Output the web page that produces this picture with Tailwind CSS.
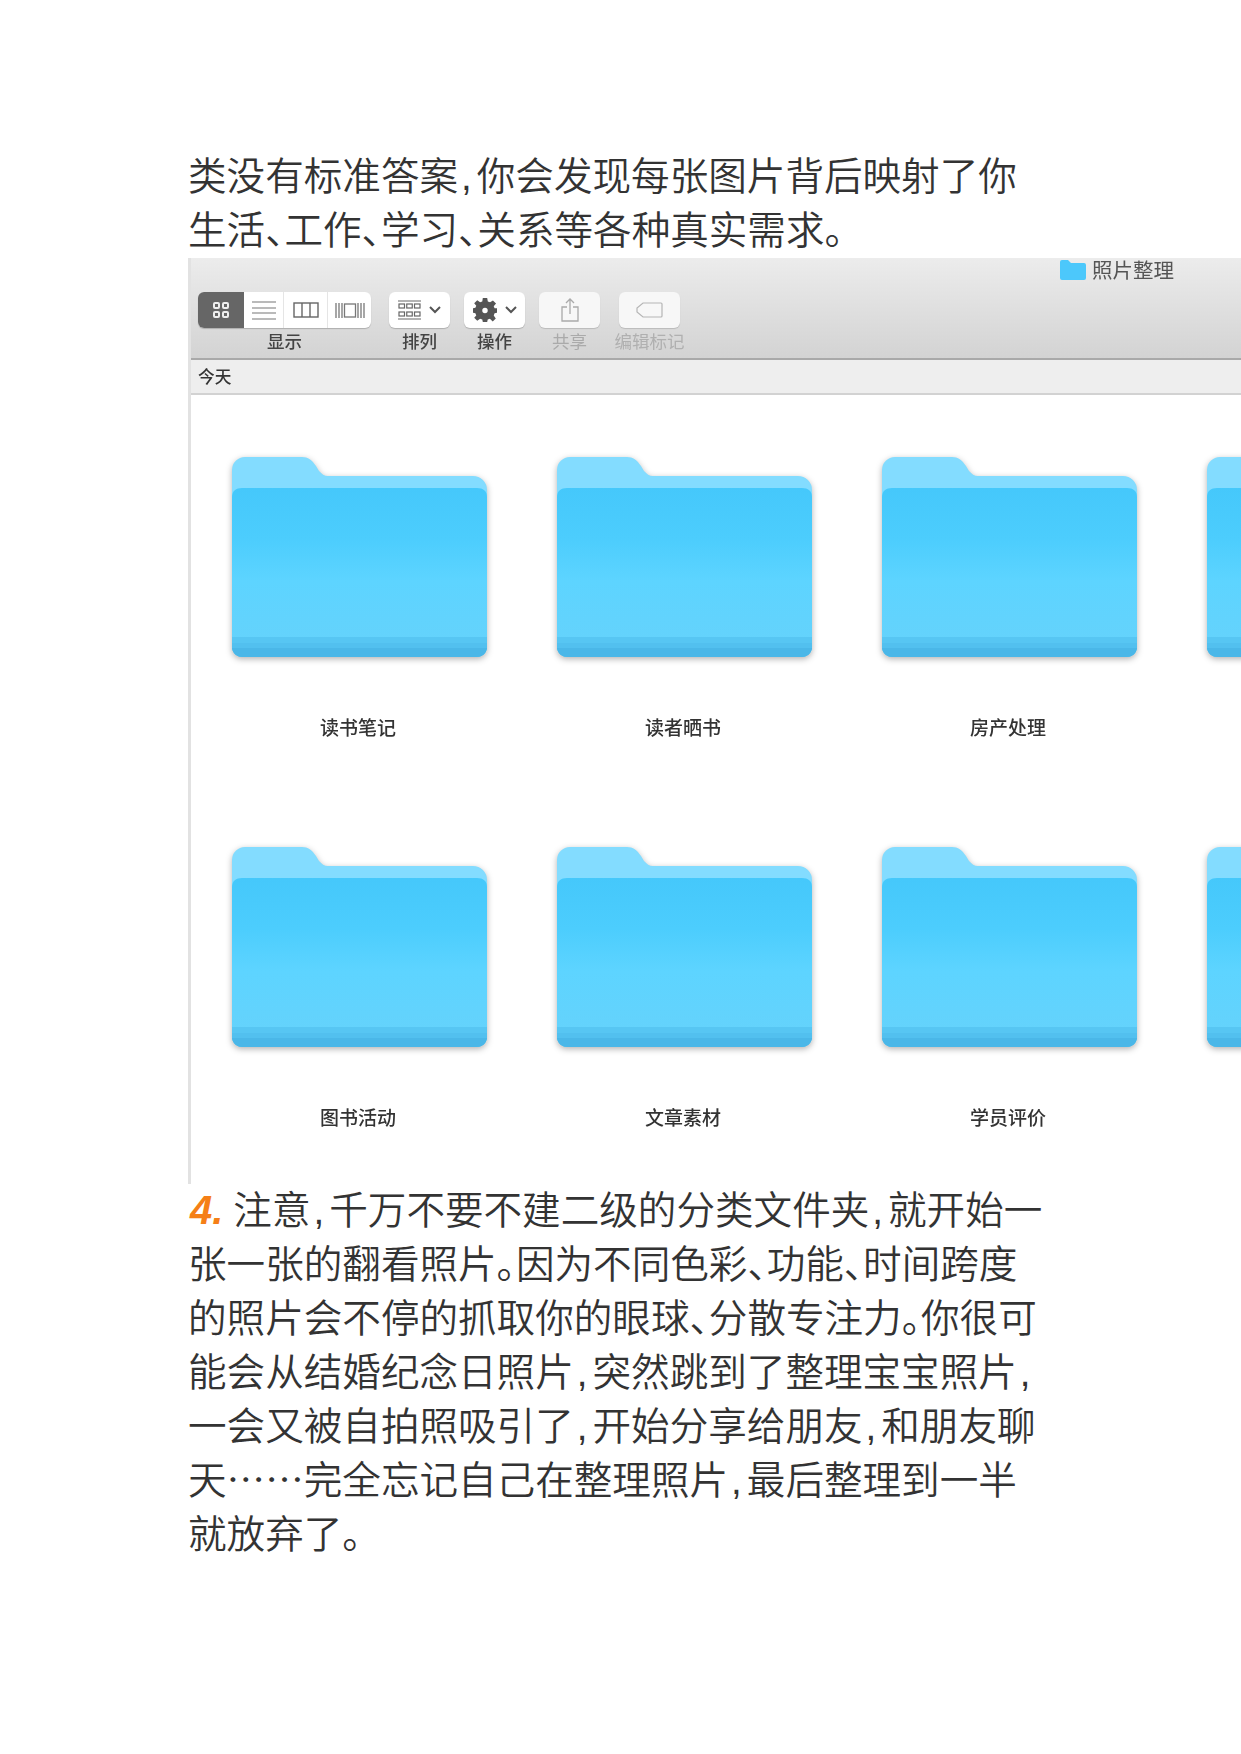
<!DOCTYPE html>
<html lang="zh-CN">
<head>
  <meta charset="UTF-8">
  <title>照片整理</title>
  <script src="https://cdn.jsdelivr.net/npm/@tailwindcss/browser@4"></script>
</head>
<body class="bg-white">
  <!-- shared folder artwork -->
  <svg width="0" height="0" class="absolute">
    <defs>
      <linearGradient id="front" x1="0" y1="0" x2="0" y2="1">
        <stop offset="0" stop-color="#45c8fb"/>
        <stop offset="0.3" stop-color="#4ccdfd"/>
        <stop offset="0.55" stop-color="#5dd4ff"/>
        <stop offset="1" stop-color="#66d2fb"/>
      </linearGradient>
      <symbol id="folder" viewBox="0 0 255 201">
        <path d="M0 14a13 13 0 0 1 13-13h57c6 0 10 3 14 9l3 5c3 3 5 5 9 5h145a14 14 0 0 1 14 14v30H0z" fill="#83dcff"/>
        <path d="M0 41c0-6 4-9 10-9h235c6 0 10 3 10 9v149c0 7-5 11-11 11H11c-6 0-11-4-11-11z" fill="url(#front)"/>
        <path d="M0 181h255v9c0 7-5 11-11 11H11c-6 0-11-4-11-11z" fill="#57c6f3"/>
        <path d="M0 187h255v3c0 7-5 11-11 11H11c-6 0-11-4-11-11z" fill="#52c0ef"/>
        <path d="M0 192h255c-1 6-5 9-11 9H11c-6 0-10-3-11-9z" fill="#4ab7e8"/>
      </symbol>
    </defs>
  </svg>

  <div class="w-[1241px] h-[1754px] overflow-hidden pt-[146px] font-['Noto_Sans_CJK_SC',sans-serif] font-[350] text-[38.6px] leading-[54px] text-[#333] [font-feature-settings:'halt']">
    <div class="pl-[188px] whitespace-nowrap">
      <div>类没有标准答案<span class="font-['Liberation_Sans',sans-serif] leading-none ml-[3px] mr-[5px]">,</span>你会发现每张图片背后映射了你</div>
      <div>生活、工作、学习、关系等各种真实需求。</div>
    </div>

    <!-- finder window, the source is a soft upscaled screenshot -->
    <div class="ml-[188px] mt-[4px] h-[926px] border-l-[3px] border-[#e2e2e2] bg-white text-[17.5px] leading-none [font-feature-settings:normal] font-normal blur-[0.5px]">
      <div class="h-[102px] bg-gradient-to-b from-[#ececec] to-[#d3d3d3] border-b-2 border-[#a9a9a9]">
        <div class="h-[34px] pb-[11px] flex items-center pl-[869px] text-[20.5px] text-[#555]">
          <svg width="26" height="21" viewBox="0 0 26 21" class="mr-[6px]">
            <path d="M0 3a2 2 0 0 1 2-2h6l3 3h13a2 2 0 0 1 2 2v13a2 2 0 0 1-2 2H2a2 2 0 0 1-2-2z" fill="#4cc8fb"/>
          </svg>
          <span>照片整理</span>
        </div>
        <div class="flex pl-[7px] text-[#444] whitespace-nowrap">
          <div class="w-[173px] flex flex-col items-center">
            <div class="w-full h-[36px] flex rounded-[6px] bg-white shadow-[0_1px_1px_rgba(0,0,0,0.2)] overflow-hidden">
              <div class="w-[46px] bg-[#666] flex items-center justify-center">
                <svg width="18" height="18" viewBox="0 0 18 18" fill="none" stroke="#eee" stroke-width="2"><rect x="2" y="2" width="5" height="5" rx="1"/><rect x="11" y="2" width="5" height="5" rx="1"/><rect x="2" y="11" width="5" height="5" rx="1"/><rect x="11" y="11" width="5" height="5" rx="1"/></svg>
              </div>
              <div class="w-[40px] border-r border-[#e5e5e5] flex items-center justify-center">
                <svg width="24" height="19" viewBox="0 0 24 19" stroke="#777" stroke-width="1.2"><path d="M0 1h24M0 7h24M0 12h24M0 18h24"/></svg>
              </div>
              <div class="w-[44px] border-r border-[#e5e5e5] flex items-center justify-center">
                <svg width="26" height="16" viewBox="0 0 26 16" fill="none" stroke="#666" stroke-width="1.4"><rect x="1" y="1" width="24" height="14"/><path d="M9 1v14M17 1v14"/></svg>
              </div>
              <div class="flex-1 flex items-center justify-center">
                <svg width="30" height="17" viewBox="0 0 30 17" fill="none" stroke="#777" stroke-width="1.3"><rect x="9.500" y="2" width="11" height="13"/><path d="M1 1v15M4 1v15M7 1v15M23 1v15M26 1v15M29 1v15"/></svg>
              </div>
            </div>
            <span class="mt-[4px] font-medium">显示</span>
          </div>

          <div class="ml-[18px] w-[61px] flex flex-col items-center">
            <div class="w-full h-[36px] flex items-center justify-center gap-[8px] rounded-[6px] bg-white shadow-[0_1px_1px_rgba(0,0,0,0.2)]">
              <svg width="23" height="20" viewBox="0 0 23 20" fill="none" stroke="#666" stroke-width="1.2"><path d="M0 1h23M0 19h23"/><rect x="1" y="4" width="5.500" height="4"/><rect x="8.750" y="4" width="5.500" height="4"/><rect x="16.500" y="4" width="5.500" height="4"/><rect x="1" y="12" width="5.500" height="4"/><rect x="8.750" y="12" width="5.500" height="4"/><rect x="16.500" y="12" width="5.500" height="4"/></svg>
              <svg width="12" height="8" viewBox="0 0 12 8" fill="none" stroke="#555" stroke-width="2"><path d="M1 1l5 5 5-5"/></svg>
            </div>
            <span class="mt-[4px] font-medium">排列</span>
          </div>

          <div class="ml-[14px] w-[61px] flex flex-col items-center">
            <div class="w-full h-[36px] flex items-center justify-center gap-[8px] rounded-[6px] bg-white shadow-[0_1px_1px_rgba(0,0,0,0.2)]">
              <svg width="24" height="24" viewBox="0 0 22 22"><path fill="#555" fill-rule="evenodd" d="M9 0h4l.6 3.200 2 .8L18.300 2.200l2.800 2.800L19 7.500l.8 2L22 9.500v4l-2.200.5-.8 2 1.900 2.700-2.800 2.800L15.500 19l-2 .8L13 22H9l-.5-2.200-2-.8-2.600 1.900-2.800-2.800L3 16l-.8-2L0 13.500v-4l2.200-.5.800-2L1.100 4.900l2.800-2.800L6.500 4l2-.8zM11 9a2.500 2.500 0 1 0 0 5 2.500 2.500 0 0 0 0-5z"/></svg>
              <svg width="12" height="8" viewBox="0 0 12 8" fill="none" stroke="#555" stroke-width="2"><path d="M1 1l5 5 5-5"/></svg>
            </div>
            <span class="mt-[4px] font-medium">操作</span>
          </div>

          <div class="ml-[14px] w-[61px] flex flex-col items-center text-[#aaa]">
            <div class="w-full h-[36px] flex items-center justify-center rounded-[6px] bg-[#f7f7f7] shadow-[0_1px_1px_rgba(0,0,0,0.15)]">
              <svg width="18" height="24" viewBox="0 0 18 24" fill="none" stroke="#aaa" stroke-width="1.300"><path d="M6 9H1v14h16V9h-5M9 16V1M5 5l4-4 4 4"/></svg>
            </div>
            <span class="mt-[4px]">共享</span>
          </div>

          <div class="ml-[19px] w-[61px] flex flex-col items-center text-[#b0b0b0]">
            <div class="w-full h-[36px] flex items-center justify-center rounded-[6px] bg-[#f7f7f7] shadow-[0_1px_1px_rgba(0,0,0,0.15)]">
              <svg width="27" height="16" viewBox="0 0 27 16" fill="none" stroke="#b5b5b5" stroke-width="1.200"><path d="M7 1h18a1 1 0 0 1 1 1v12a1 1 0 0 1-1 1H7l-6-5V6z"/></svg>
            </div>
            <span class="mt-[4px]">编辑标记</span>
          </div>
        </div>
      </div>

      <div class="h-[35px] bg-[#eee] border-b-2 border-[#d2d2d2] flex items-center pl-[7px] text-[#333] text-[16.7px] font-medium">今天</div>

      <div class="pt-[61px] pl-[41px] grid grid-cols-[repeat(4,255px)] gap-x-[70px] gap-y-[106.5px] text-[19px] leading-[24px] text-[#333] text-center font-medium">
        <div><svg width="255" height="201" class="drop-shadow-[0_2px_3px_rgba(0,0,0,0.3)]"><use href="#folder"/></svg><div class="mt-[58px] pr-[3px]">读书笔记</div></div>
        <div><svg width="255" height="201" class="drop-shadow-[0_2px_3px_rgba(0,0,0,0.3)]"><use href="#folder"/></svg><div class="mt-[58px] pr-[3px]">读者晒书</div></div>
        <div><svg width="255" height="201" class="drop-shadow-[0_2px_3px_rgba(0,0,0,0.3)]"><use href="#folder"/></svg><div class="mt-[58px] pr-[3px]">房产处理</div></div>
        <div><svg width="255" height="201" class="drop-shadow-[0_2px_3px_rgba(0,0,0,0.3)]"><use href="#folder"/></svg></div>
        <div><svg width="255" height="201" class="drop-shadow-[0_2px_3px_rgba(0,0,0,0.3)]"><use href="#folder"/></svg><div class="mt-[58px] pr-[3px]">图书活动</div></div>
        <div><svg width="255" height="201" class="drop-shadow-[0_2px_3px_rgba(0,0,0,0.3)]"><use href="#folder"/></svg><div class="mt-[58px] pr-[3px]">文章素材</div></div>
        <div><svg width="255" height="201" class="drop-shadow-[0_2px_3px_rgba(0,0,0,0.3)]"><use href="#folder"/></svg><div class="mt-[58px] pr-[3px]">学员评价</div></div>
        <div><svg width="255" height="201" class="drop-shadow-[0_2px_3px_rgba(0,0,0,0.3)]"><use href="#folder"/></svg></div>
      </div>
    </div>

    <div class="pl-[188px] whitespace-nowrap -mt-[4px]">
      <div><span class="font-['Liberation_Sans',sans-serif] italic font-bold leading-none text-[#f57f17] text-[40px] mr-[10px] ml-[2px]">4.</span>注意<span class="font-['Liberation_Sans',sans-serif] leading-none ml-[3px] mr-[5px]">,</span>千万不要不建二级的分类文件夹<span class="font-['Liberation_Sans',sans-serif] leading-none ml-[3px] mr-[5px]">,</span>就开始一</div>
      <div>张一张的翻看照片。因为不同色彩、功能、时间跨度</div>
      <div>的照片会不停的抓取你的眼球、分散专注力。你很可</div>
      <div>能会从结婚纪念日照片<span class="font-['Liberation_Sans',sans-serif] leading-none ml-[3px] mr-[5px]">,</span>突然跳到了整理宝宝照片<span class="font-['Liberation_Sans',sans-serif] leading-none ml-[3px] mr-[5px]">,</span></div>
      <div>一会又被自拍照吸引了<span class="font-['Liberation_Sans',sans-serif] leading-none ml-[3px] mr-[5px]">,</span>开始分享给朋友<span class="font-['Liberation_Sans',sans-serif] leading-none ml-[3px] mr-[5px]">,</span>和朋友聊</div>
      <div>天……完全忘记自己在整理照片<span class="font-['Liberation_Sans',sans-serif] leading-none ml-[3px] mr-[5px]">,</span>最后整理到一半</div>
      <div>就放弃了。</div>
    </div>
  </div>
</body>
</html>
